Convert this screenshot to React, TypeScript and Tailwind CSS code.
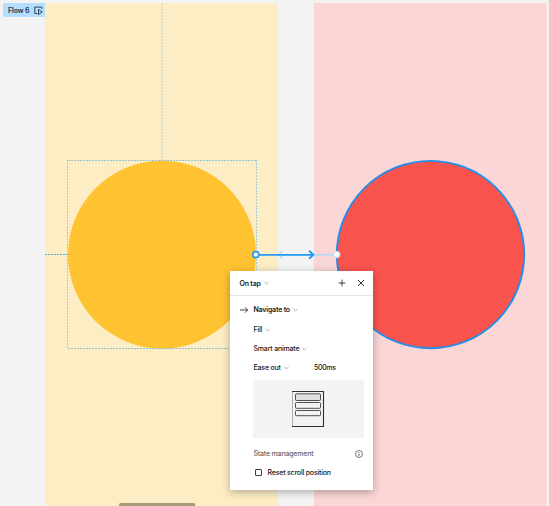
import React from "react";

function Chevron() {
  return (
    <svg className="shrink-0" width="5" height="4" viewBox="0 0 5 4" fill="none">
      <path d="M0.5 1 2.5 2.9 4.5 1" stroke="#999999" strokeWidth="0.8" />
    </svg>
  );
}

function Select({ label, bold = false }: { label: string; bold?: boolean }) {
  return (
    <div className={bold ? "flex items-center gap-[3px] font-semibold" : "flex items-center gap-[3px]"}>
      <span>{label}</span>
      <Chevron />
    </div>
  );
}

function FlowBadge() {
  return (
    <div className="absolute left-[3px] top-[3px] flex h-[14px] w-[42px] items-center justify-between rounded-l-[2px] bg-[#b4deff] pl-[5px] pr-[2px] text-[7px] font-semibold tracking-[-0.15px] text-[#27343f]">
      <span>Flow 6</span>
      <svg width="9" height="9" viewBox="0 0 9 9" fill="none">
        <path d="M3.5 7.5H0.8V1.1H7.9V3" stroke="#27343f" strokeWidth="0.9" />
        <path d="M4.5 3.5V8.4L8.2 5.9Z" stroke="#27343f" strokeWidth="0.9" />
      </svg>
    </div>
  );
}

function Canvas() {
  return (
    <svg className="absolute inset-0" width="549" height="506" viewBox="0 0 549 506" fill="none">
      <rect x="45.3" y="3" width="232.7" height="503" fill="#fcedc5" />
      <rect x="314" y="3" width="232.5" height="503" fill="#fad6d6" />
      <circle cx="162" cy="254.7" r="94" fill="#ffc331" />
      <g stroke="#58addd" strokeWidth="1">
        <path d="M68 160.5H256M68 348.5H256" strokeDasharray="2 1" opacity="0.65" />
        <path d="M67.5 160V349M256.5 160V349" strokeDasharray="2 1" opacity="0.5" />
        <path d="M162 3V160" strokeDasharray="2 1" opacity="0.4" />
        <path d="M45 254.5H68" strokeDasharray="2 1" />
      </g>
      <circle cx="430.5" cy="254.6" r="93.7" fill="#f9534d" stroke="#248eea" strokeWidth="1.9" />
      <path d="M278 254.8H337" stroke="#add8fa" strokeWidth="1.4" />
      <path d="M282.5 251L278.8 254.8 282.5 258.6" stroke="#add8fa" strokeWidth="1.6" />
      <path d="M259 254.8H313" stroke="#249af5" strokeWidth="1.8" />
      <path d="M309.2 250.8 313.2 254.8 309.2 258.8" stroke="#249af5" strokeWidth="2" />
      <circle cx="255.8" cy="254.6" r="3" fill="white" stroke="#249af5" strokeWidth="1.7" />
      <circle cx="336.7" cy="254.6" r="3" fill="white" stroke="#c5e3fb" strokeWidth="1.3" />
      <rect x="119" y="503" width="76.3" height="6" rx="2" fill="#a59c7c" />
    </svg>
  );
}

function Preview() {
  return (
    <div className="ml-[23px] mt-[3px] flex h-[58px] w-[111px] items-center justify-center bg-[#f3f3f3]">
      <svg className="mr-[1px]" width="34" height="38" viewBox="0 0 34 38" fill="none" stroke="#303030">
        <path d="M1.5 36.5V1.5" stroke="#b0b0b0" />
        <path d="M1 1.5H32.5V36.5H1" strokeWidth="1.1" />
        <rect x="4.5" y="3.8" width="25" height="6.7" rx="0.8" fill="#dedfdf" stroke="#505050" />
        <rect x="4.5" y="12.5" width="25" height="5.8" rx="0.8" stroke="#505050" />
        <rect x="4.5" y="20.5" width="25" height="5.2" rx="0.8" stroke="#505050" />
      </svg>
    </div>
  );
}

function InteractionPanel() {
  return (
    <div className="absolute left-[230px] top-[271px] h-[219px] w-[143px] bg-white text-[7px] font-medium tracking-[-0.19px] text-[#202020] shadow-[0_2px_8px_rgba(0,0,0,0.3)]">
      <div className="flex h-[25px] items-center justify-between border-b border-[#e5e5e5] pl-[9.5px] pr-[8px]">
        <Select label="On tap" bold />
        <div className="flex items-center gap-[11px]">
          <svg width="8" height="8" viewBox="0 0 8 8" fill="none" stroke="#303030">
            <path d="M0.6 4H7.4M4 0.6V7.4" strokeWidth="0.9" />
          </svg>
          <svg width="8" height="8" viewBox="0 0 8 8" fill="none" stroke="#303030">
            <path d="M1 1 7 7M7 1 1 7" strokeWidth="1" />
          </svg>
        </div>
      </div>
      <div className="flex flex-col pt-[5px]">
        <div className="-mt-px flex h-[19px] items-center gap-[5.5px] pl-[10px]">
          <svg width="8" height="8" viewBox="0 0 8 8" fill="none" stroke="#303030">
            <path d="M0 4H7.7M5 1.3 7.7 4 5 6.7" strokeWidth="0.9" />
          </svg>
          <Select label="Navigate to" bold />
        </div>
        <div className="mt-px flex h-[19px] items-center pl-[23.5px]">
          <Select label="Fill" />
        </div>
        <div className="flex h-[19px] items-center pl-[23.5px]">
          <Select label="Smart animate" />
        </div>
        <div className="flex h-[19px] items-center pl-[23.5px]">
          <div className="w-[60.5px]">
            <Select label="Ease out" />
          </div>
          <span className="tracking-[-0.35px]">500ms</span>
        </div>
        <Preview />
        <div className="mt-[6px] flex h-[19px] items-center justify-between pl-[23.5px] pr-[10px] text-[#686868]">
          <span>State management</span>
          <svg width="8" height="8" viewBox="0 0 8 8" fill="none" stroke="#404040">
            <circle cx="4" cy="4" r="3.5" strokeWidth="0.7" />
            <path d="M4 3.5V6M4 2V2.8" strokeWidth="0.8" />
          </svg>
        </div>
        <div className="flex h-[19px] items-center gap-[5.5px] pl-[25px]">
          <svg width="7" height="7" viewBox="0 0 7 7" fill="none">
            <rect x="0.5" y="0.5" width="6" height="6" rx="0.5" stroke="#404040" />
          </svg>
          <span>Reset scroll position</span>
        </div>
      </div>
    </div>
  );
}

export default function App() {
  return (
    <div className="relative h-[506px] w-[549px] overflow-hidden bg-[#f3f3f3] font-['Inter',sans-serif] leading-none">
      <Canvas />
      <FlowBadge />
      <InteractionPanel />
    </div>
  );
}
